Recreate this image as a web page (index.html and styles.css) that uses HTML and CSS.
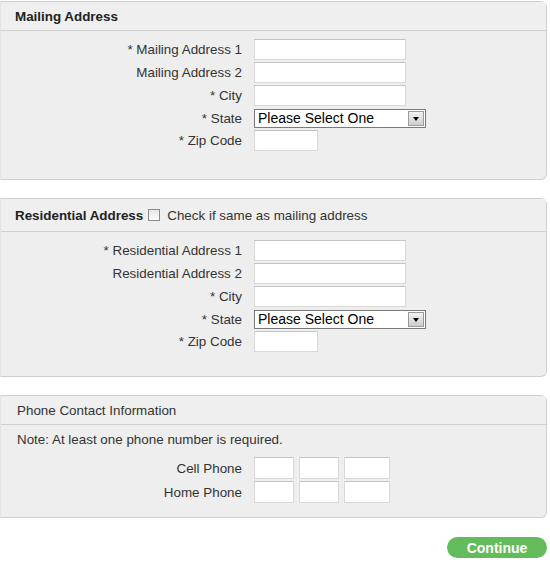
FILE: index.html
```html
<!DOCTYPE html>
<html>
<head>
<meta charset="utf-8">
<link rel="stylesheet" href="styles.css">
</head>
<body>
<div class="page">
  <section class="panel panel-mail">
    <div class="panel-head"><span class="title">Mailing Address</span></div>
    <div class="panel-body">
      <div class="row"><label>* Mailing Address 1</label><input class="txt" type="text"></div>
      <div class="row"><label>Mailing Address 2</label><input class="txt" type="text"></div>
      <div class="row"><label>* City</label><input class="txt" type="text"></div>
      <div class="row row-sel"><label>* State</label><div class="select"><span>Please Select One</span><span class="arrow"></span></div></div>
      <div class="row"><label>* Zip Code</label><input class="txt zip" type="text"></div>
    </div>
  </section>

  <section class="panel panel-res">
    <div class="panel-head"><span class="title">Residential Address</span><span class="check"></span><span class="check-label">Check if same as mailing address</span></div>
    <div class="panel-body">
      <div class="row"><label>* Residential Address 1</label><input class="txt" type="text"></div>
      <div class="row"><label>Residential Address 2</label><input class="txt" type="text"></div>
      <div class="row"><label>* City</label><input class="txt" type="text"></div>
      <div class="row row-sel"><label>* State</label><div class="select"><span>Please Select One</span><span class="arrow"></span></div></div>
      <div class="row"><label>* Zip Code</label><input class="txt zip" type="text"></div>
    </div>
  </section>

  <section class="panel panel-phone">
    <div class="panel-head"><span class="plain">Phone Contact Information</span></div>
    <div class="panel-body">
      <p class="note">Note: At least one phone number is required.</p>
      <div class="row"><label>Cell Phone</label><div class="phone"><input class="txt p3" type="text"><input class="txt p3" type="text"><input class="txt p4" type="text"></div></div>
      <div class="row"><label>Home Phone</label><div class="phone"><input class="txt p3" type="text"><input class="txt p3" type="text"><input class="txt p4" type="text"></div></div>
    </div>
  </section>

  <div class="actions"><button class="continue">Continue</button></div>
</div>
</body>
</html>
```

FILE: styles.css
```css
* { box-sizing: border-box; }
html, body { margin: 0; padding: 0; background: #fff; }
body {
  font-family: Arial, "Liberation Sans", sans-serif;
  font-size: 13.4px;
  color: #333;
}
.page { width: 550px; padding-top: 1px; }
.panel {
  width: 547px;
  background: #eeeeee;
  border: 1px solid #cfcfcf;
  border-left-color: #e4e4e4;
  border-radius: 0 6px 6px 0;
  margin-bottom: 18px;
}
.panel-head {
  height: 29px;
  border-bottom: 1px solid #cfcfcf;
  display: flex;
  align-items: center;
  padding-left: 14px;
  background: #efefef;
}
.panel-res .panel-head { height: 33px; }
.title { font-weight: bold; color: #222; }
.plain { padding-left: 2px; color: #333; }
.check {
  width: 12px; height: 12px;
  border: 1px solid #8a8a8a;
  background: linear-gradient(#e6e6e6, #fcfcfc);
  margin-left: 5px;
  margin-right: 7px;
}
.check-label { color: #333; }
.panel-body { padding: 8px 0 0 0; }
.panel-mail .panel-body { height: 148px; }
.panel-res .panel-body { height: 144px; }
.panel-phone .panel-body { height: 92px; padding-top: 7px; }
.row {
  display: grid;
  grid-template-columns: 241px auto;
  column-gap: 12px;
  align-items: center;
  height: 21px;
  margin-bottom: 2px;
}
.row-sel { height: 20px; margin-bottom: 2px; }
.row label { text-align: right; white-space: nowrap; }
.txt {
  height: 21px;
  width: 152px;
  border: 1px solid #d8d8d8;
  border-top-color: #c4c4c4;
  background: #fff;
  margin: 0;
  padding: 0;
  font: inherit;
}
.txt.zip { width: 64px; }
.select {
  width: 172px;
  height: 19px;
  border: 1px solid #7a7a7a;
  background: #fff;
  display: flex;
  align-items: center;
  justify-content: space-between;
  font-size: 14px;
  color: #000;
  padding-left: 3px;
}
.arrow {
  width: 16px;
  height: 15px;
  margin-right: 1px;
  border: 1px solid #9a9a9a;
  background: linear-gradient(#f2f2f2, #cfcfcf);
  position: relative;
}
.arrow::after {
  content: "";
  position: absolute;
  left: 4px; top: 5px;
  border-left: 3.5px solid transparent;
  border-right: 3.5px solid transparent;
  border-top: 4px solid #000;
}
.note { margin: 0 0 10px 16px; line-height: 15px; }
.phone { display: flex; gap: 5px; }
.txt.p3 { width: 40px; }
.txt.p4 { width: 46px; }
.panel-phone .row { height: 22px; margin-bottom: 2px; }
.panel-phone .txt { height: 22px; }
.actions { display: flex; justify-content: flex-end; padding-right: 3px; margin-top: 19px; }
.continue {
  width: 100px;
  height: 21px;
  border: none;
  border-radius: 11px;
  background: #62bc5b;
  color: #fff;
  font-family: Arial, "Liberation Sans", sans-serif;
  font-weight: bold;
  font-size: 14px;
  padding: 0;
}
```
